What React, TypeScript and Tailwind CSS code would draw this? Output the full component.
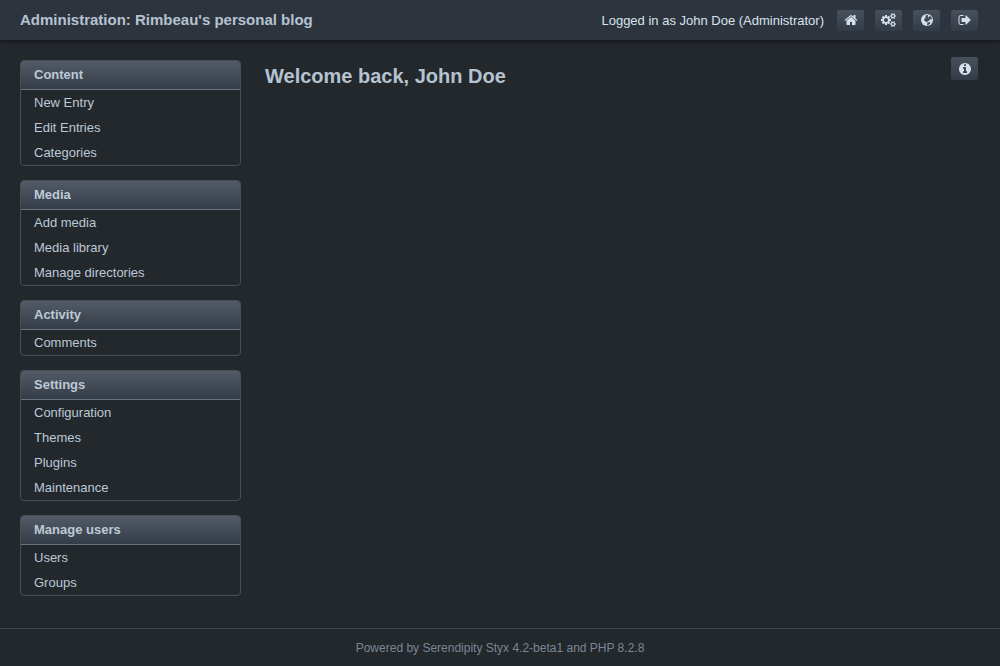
import type { ReactNode } from "react";

type MenuGroup = { title: string; items: string[] };

const menu: MenuGroup[] = [
  { title: "Content", items: ["New Entry", "Edit Entries", "Categories"] },
  { title: "Media", items: ["Add media", "Media library", "Manage directories"] },
  { title: "Activity", items: ["Comments"] },
  { title: "Settings", items: ["Configuration", "Themes", "Plugins", "Maintenance"] },
  { title: "Manage users", items: ["Users", "Groups"] },
];

const homePath =
  "M1472 992v480q0 26-19 45t-45 19h-384v-384h-256v384h-384q-26 0-45-19t-19-45v-480q0-1 .5-3t.5-3l575-474 575 474q1 2 1 6zm223-69l-62 74q-8 9-21 11h-3q-13 0-21-7l-692-577-692 577q-12 8-24 7-13-2-21-11l-62-74q-8-10-7-23.5t11-21.5l719-599q32-26 76-26t76 26l244 204v-195q0-14 9-23t23-9h192q14 0 23 9t9 23v408l219 182q10 8 11 21.5t-7 23.5z";
const signOutPath =
  "M704 1440q0 4 1 20t.5 26.5-3 23.5-10 19.5-20.5 6.5h-320q-119 0-203.5-84.5t-84.5-203.5v-704q0-119 84.5-203.5t203.5-84.5h320q13 0 22.5 9.5t9.5 22.5q0 4 1 20t.5 26.5-3 23.5-10 19.5-20.5 6.5h-320q-66 0-113 47t-47 113v704q0 66 47 113t113 47h312l11.5 1 11.5 3 8 5.5 7 9 2 13.5zm928-544q0 26-19 45l-544 544q-19 19-45 19t-45-19-19-45v-288h-448q-26 0-45-19t-19-45v-384q0-26 19-45t45-19h448v-288q0-26 19-45t45-19 45 19l544 544q19 19 19 45z";
const infoPath =
  "M1152 1376v-160q0-14-9-23t-23-9h-96v-512q0-14-9-23t-23-9h-320q-14 0-23 9t-9 23v160q0 14 9 23t23 9h96v320h-96q-14 0-23 9t-9 23v160q0 14 9 23t23 9h448q14 0 23-9t9-23zm-128-896v-160q0-14-9-23t-23-9h-192q-14 0-23 9t-9 23v160q0 14 9 23t23 9h192q14 0 23-9t9-23zm640 416q0 209-103 385.5t-279.5 279.5-385.5 103-385.5-103-279.5-279.5-103-385.5 103-385.5 279.5-279.5 385.5-103 385.5 103 279.5 279.5 103 385.5z";
const largeGearPath =
  "M896 896q0-106-75-181t-181-75-181 75-75 181 75 181 181 75 181-75 75-181zM1280 805v185q0 10-7 19.5t-16 10.5l-155 24q-11 35-32 76 34 48 90 115 7 11 7 20 0 12-7 19-23 30-82.5 89.5t-78.5 59.5q-11 0-21-7l-115-90q-37 19-77 31-11 108-23 155-7 24-30 24h-186q-11 0-20-7.5t-10-17.5l-23-153q-34-10-75-31l-118 89q-7 7-20 7-11 0-21-8-144-133-144-160 0-9 7-19 10-14 41-53t47-61q-23-44-35-82l-152-24q-10-1-17-9.5t-7-19.5v-185q0-10 7-19.5t16-10.5l155-24q11-35 32-76-34-48-90-115-7-11-7-20 0-12 7-20 22-30 82-89t79-59q11 0 21 7l115 90q34-18 77-32 11-108 23-154 7-24 30-24h186q11 0 20 7.5t10 17.5l23 153q34 10 75 31l118-89q8-7 20-7 11 0 21 8 144 133 144 160 0 8-7 19-12 16-42 54t-45 60q23 48 34 82l152 23q10 2 17 10.5t7 19.5z";
const smallGearPath =
  "M1664 384q0-52-38-90t-90-38-90 38-38 90q0 53 37.5 90.5t90.5 37.5 90.5-37.5 37.5-90.5zM1920 314v140q0 16-149 31-13 29-30 52 51 113 51 138 0 4-4 7-122 71-124 71-8 0-46-47t-52-68q-20 2-30 2t-30-2q-14 21-52 68t-46 47q-2 0-124-71-4-3-4-7 0-25 51-138-17-23-30-52-149-15-149-31v-140q0-16 149-31 13-29 30-52-51-113-51-138 0-4 4-7 4-2 35-20t59-34 30-16q8 0 46 46.500t52 67.500q20-2 30-2t30 2q51-71 92-112l6-2q4 0 124 70 4 3 4 7 0 25-51 138 17 23 30 52 149 15 149 31z";

function Glyph({ path }: { path: string }) {
  return (
    <svg viewBox="0 0 1792 1792" className="size-3.5" fill="currentColor" aria-hidden="true">
      <path d={path} />
    </svg>
  );
}

function Gears() {
  return (
    <svg viewBox="0 0 1920 1792" className="h-3.5 w-[15px]" fill="currentColor" fillRule="evenodd" aria-hidden="true">
      <path d={largeGearPath} />
      <path d={smallGearPath} />
      <path d={smallGearPath} transform="translate(0 1024)" />
    </svg>
  );
}

function Globe() {
  return (
    <svg viewBox="0 0 24 24" className="size-3" aria-hidden="true">
      <circle cx="12" cy="12" r="12" fill="currentColor" />
      <path
        d="M9 3l4-1 2 2-2 2 3 1 1-3 3 1 2 5-2 1-2-1-1 3-3 1-2 3-2-2-3-1-1-4 3-2zM13 17l4-1 2 2-4 4-3 1z"
        fill="#414953"
      />
    </svg>
  );
}

const buttonStyle =
  "flex min-w-[27px] items-center justify-center rounded-xs bg-linear-to-b from-[#47505b] to-[#333c46] px-[6px] text-[#d5dfe9]";

function ToolLink({ label, children }: { label: string; children: ReactNode }) {
  return (
    <li>
      <a href="#" aria-label={label} className={`${buttonStyle} h-[21px]`}>
        {children}
      </a>
    </li>
  );
}

function MenuCard({ group }: { group: MenuGroup }) {
  return (
    <section className="overflow-hidden rounded border border-[#474e5d]">
      <h2 className="border-b border-[#697480] bg-linear-to-b from-[#535b66] to-[#343d47] px-[13px] text-[13px] leading-[28px] font-bold text-[#bdc9d6]">
        {group.title}
      </h2>
      <ul>
        {group.items.map((item) => (
          <li key={item}>
            <a href="#" className="block px-[13px] text-[13px] leading-[25px] text-[#bdc9d6]">
              {item}
            </a>
          </li>
        ))}
      </ul>
    </section>
  );
}

export default function App() {
  return (
    <div className="flex min-h-screen flex-col bg-[#23282d] font-['Liberation_Sans',Arial,sans-serif] text-[#b5c3d1]">
      <header className="flex h-10 items-center justify-between bg-[#2d343e] pr-[22px] pl-5 shadow-[0_1px_4px_#0e1115]">
        <h1 className="text-[15px] leading-5 font-bold">Administration: Rimbeau's personal blog</h1>
        <nav aria-label="User" className="flex items-center gap-[13px]">
          <p className="pt-0.5 text-[13px] leading-5 text-[#d5e4ee]">Logged in as John Doe (Administrator)</p>
          <ul className="flex items-center gap-[11px]">
            <ToolLink label="Start page">
              <Glyph path={homePath} />
            </ToolLink>
            <ToolLink label="Personal settings">
              <Gears />
            </ToolLink>
            <ToolLink label="Back to blog">
              <Globe />
            </ToolLink>
            <ToolLink label="Log out">
              <Glyph path={signOutPath} />
            </ToolLink>
          </ul>
        </nav>
      </header>
      <div className="flex flex-1 gap-6 pt-5 pr-[22px] pb-8 pl-5">
        <nav aria-label="Main" className="flex w-[221px] shrink-0 flex-col gap-3.5">
          {menu.map((group) => (
            <MenuCard key={group.title} group={group} />
          ))}
        </nav>
        <main className="flex flex-1 items-start justify-between">
          <h2 className="text-xl leading-8 font-bold">Welcome back, John Doe</h2>
          <button type="button" aria-label="Information" className={`${buttonStyle} -mt-[3px] h-[23px]`}>
            <Glyph path={infoPath} />
          </button>
        </main>
      </div>
      <footer className="border-t border-[#3c434b] py-[9px] text-center text-xs leading-5 text-[#7b8693]">
        Powered by Serendipity Styx 4.2-beta1 and PHP 8.2.8
      </footer>
    </div>
  );
}
